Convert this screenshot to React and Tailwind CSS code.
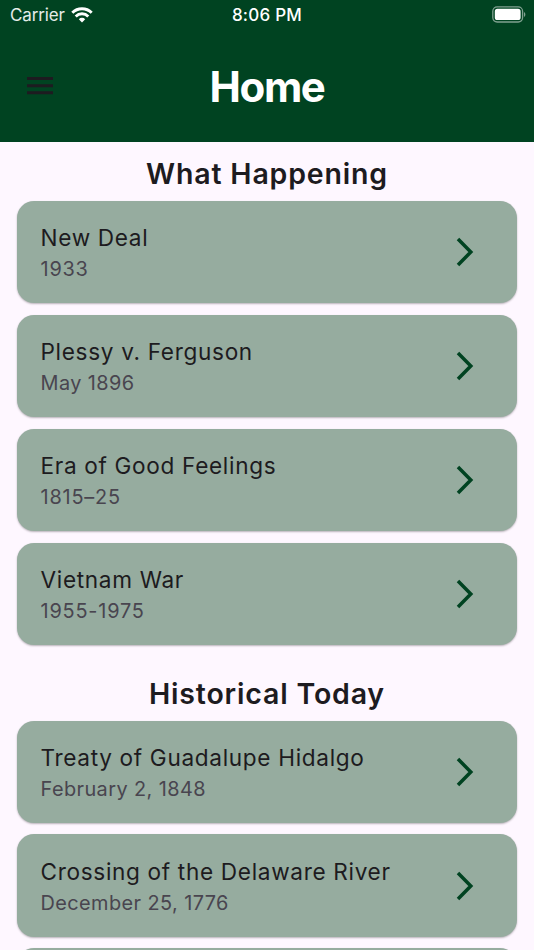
import React from "react";

const happening = [
    { title: "New Deal", date: "1933" },
    { title: "Plessy v. Ferguson", date: "May 1896" },
    { title: "Era of Good Feelings", date: "1815–25" },
    { title: "Vietnam War", date: "1955-1975" },
];

const today = [
    { title: "Treaty of Guadalupe Hidalgo", date: "February 2, 1848" },
    { title: "Crossing of the Delaware River", date: "December 25, 1776" },
    { title: "", date: "" },
];

const StatusBar = () => (
    <div className="grid grid-cols-3 items-center h-[30px] pl-[10px] pr-[8px] text-[17px] leading-[30px] text-white">
        <div className="flex items-center gap-[6px]">
            <span className="tracking-[-0.15px] text-white/90">Carrier</span>
            <svg width="22" height="16" viewBox="0 0 22 16" fill="none" stroke="white" strokeWidth="2.9">
                <path d="M1.3 5.7a13.8 13.8 0 0 1 19.4 0" />
                <path d="M4.7 9.4a8.9 8.9 0 0 1 12.6 0" />
                <path d="M11 15.5 7.8 12.2a4.5 4.5 0 0 1 6.4 0z" fill="white" stroke="none" />
            </svg>
        </div>
        <span className="-ml-[2px] text-center font-medium tracking-[0.25px] whitespace-nowrap">8:06 PM</span>
        <svg className="justify-self-end -mt-[2px]" width="34" height="17" viewBox="0 0 34 17">
            <rect x="0.8" y="0.8" width="29.8" height="15.2" rx="4.4" fill="none" stroke="white" strokeOpacity="0.5" strokeWidth="1.3" />
            <rect x="2.8" y="2.8" width="25.8" height="11.2" rx="2.6" fill="white" />
            <path d="M32 6v5c1.8-.8 1.8-4.2 0-5z" fill="white" fillOpacity="0.5" />
        </svg>
    </div>
);

const Header = () => (
    <header className="h-[142.4px] bg-[#004321] text-white">
        <StatusBar />
        <div className="grid grid-cols-[80px_1fr_80px] items-center h-[112px]">
            <button className="flex justify-center" aria-label="Menu">
                <svg width="26" height="18" viewBox="0 0 26 18" fill="#1d1b20">
                    <path d="M0 0h26v3H0zM0 7.2h26v3H0zM0 14.3h26v3H0z" />
                </svg>
            </button>
            <h1 className="text-center text-[42px] font-bold tracking-[-1.4px]">Home</h1>
        </div>
    </header>
);

const EventCard = ({ title, date }) => {
    // Year-only dates are set a little wider
    const yearOnly = /^[\d–-]+$/.test(date);

    return (
        <li className="flex items-center justify-between h-[102.5px] shrink-0 rounded-[17px] bg-[#96ac9f] pl-[23.5px] pr-[43px] shadow-[0_1px_2px_rgba(0,0,0,0.28)]">
            <div>
                <p className="text-[22.6px] leading-[34px] tracking-[0.67px] text-[#1d1b20]">{title}</p>
                <p className={`text-[19.9px] leading-[28px] text-[#49454f] ${yearOnly ? "tracking-[0.8px]" : "tracking-[0.42px]"}`}>
                    {date}
                </p>
            </div>
            <svg width="18" height="30" viewBox="0 0 18 30" fill="none" stroke="#004321" strokeWidth="3.5">
                <path d="M2 2l12.8 13L2 28" />
            </svg>
        </li>
    );
};

const Section = ({ heading, events }) => (
    <section>
        <h2 className="text-center text-[28.5px] leading-[38px] font-semibold tracking-[0.82px] text-[#1d1b20]">{heading}</h2>
        <ul className="flex flex-col gap-[11.4px] mt-[7.7px] px-[17px]">
            {events.map((event, index) => (
                <EventCard key={index} title={event.title} date={event.date} />
            ))}
        </ul>
    </section>
);

export default function App() {
    return (
        <div className="h-[950px] overflow-hidden bg-[#fef7ff] font-['Inter',sans-serif]">
            <Header />
            <main className="flex flex-col gap-[29.8px] pt-[12.8px]">
                <Section heading="What Happening" events={happening} />
                <Section heading="Historical Today" events={today} />
            </main>
        </div>
    );
}
